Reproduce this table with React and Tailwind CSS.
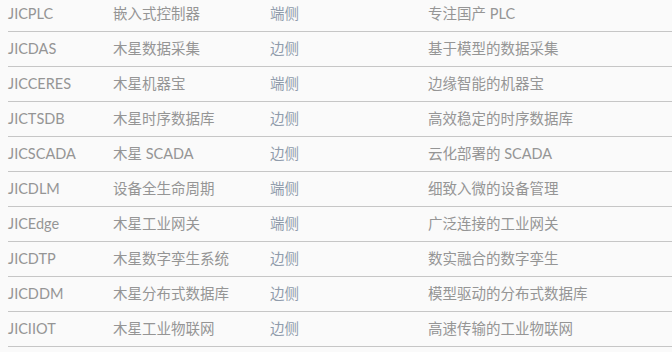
import React from 'react';

const rows = [
  ['JICPLC', '嵌入式控制器', '端侧', '专注国产 PLC'],
  ['JICDAS', '木星数据采集', '边侧', '基于模型的数据采集'],
  ['JICCERES', '木星机器宝', '端侧', '边缘智能的机器宝'],
  ['JICTSDB', '木星时序数据库', '边侧', '高效稳定的时序数据库'],
  ['JICSCADA', '木星 SCADA', '边侧', '云化部署的 SCADA'],
  ['JICDLM', '设备全生命周期', '端侧', '细致入微的设备管理'],
  ['JICEdge', '木星工业网关', '端侧', '广泛连接的工业网关'],
  ['JICDTP', '木星数字孪生系统', '边侧', '数实融合的数字孪生'],
  ['JICDDM', '木星分布式数据库', '边侧', '模型驱动的分布式数据库'],
  ['JICIIOT', '木星工业物联网', '边侧', '高速传输的工业物联网'],
];

const App = () => {
  return (
    <div className="h-[352px] w-[672px] overflow-hidden bg-[#fafafa] pl-2 font-['Lato','Noto_Sans_CJK_SC',sans-serif] text-[14.5px] text-[#959595]">
      <div className="-mt-[3px]">
        {rows.map((r) => (
          <div key={r[0]} className="flex h-[35px] items-center border-b border-[#c6c6c6]">
            <span className="w-[105px] shrink-0">{r[0]}</span>
            <span className="w-[157px] shrink-0">{r[1]}</span>
            <span className="w-[158px] shrink-0 text-[#909cac]">{r[2]}</span>
            <span>{r[3]}</span>
          </div>
        ))}
      </div>
    </div>
  );
};

export default App;
